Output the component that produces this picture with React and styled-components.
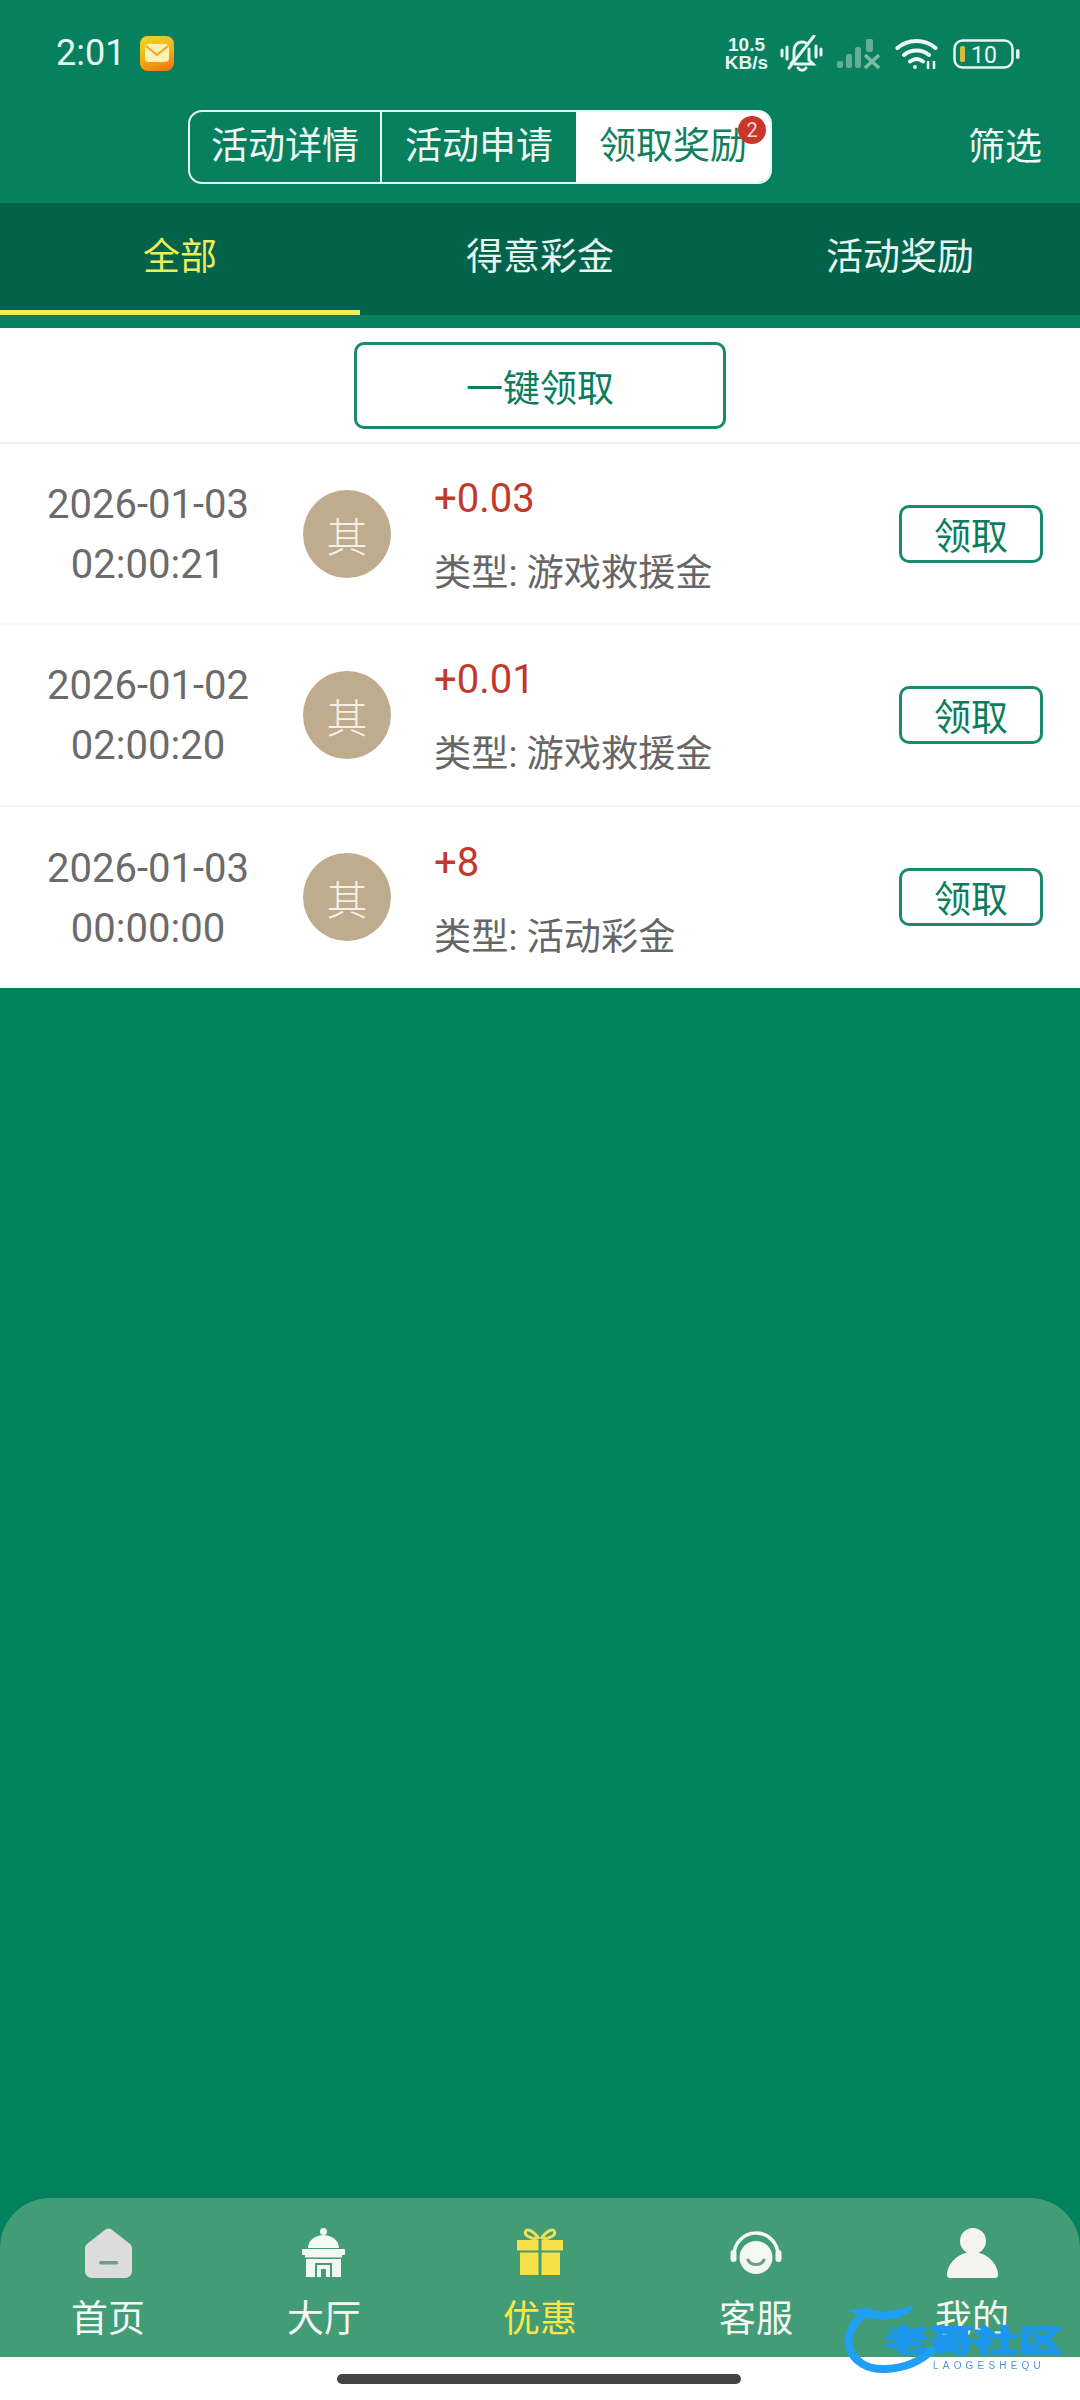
import React from "react";
import styled, { createGlobalStyle } from "styled-components";

const Global = createGlobalStyle`
  html, body { margin: 0; padding: 0; background: #fff; }
  * { box-sizing: border-box; }
  body { font-family: Roboto, "Noto Sans CJK SC", sans-serif; font-weight: 400; }
`;
const Page = styled.div`
  width: 1080px; height: 2400px; display: flex; flex-direction: column; background: #fff; position: relative; overflow: hidden;
`;
const Header = styled.div`background: #07805f; height: 203px; display: flex; flex-direction: column;`;
const StatusBar = styled.div`height: 110px; padding: 34px 60px 0 56px; display: flex; justify-content: space-between; align-items: flex-start;`;
const Clock = styled.div`display: flex; align-items: center; gap: 15px; color: #e3f8f0; font-size: 36px; line-height: 38px; height: 38px;`;
const MailBadge = styled.div`width: 34px; height: 35px; border-radius: 8px; background: linear-gradient(160deg, #e6dc2c, #f7a913 55%, #f2700f); display: flex; align-items: center; justify-content: center;`;
const StatusIcons = styled.div`display: flex; align-items: center; height: 40px; color: #e6f5ef;`;
const Speed = styled.div`font-size: 19px; line-height: 18px; font-weight: 700; text-align: center; font-family: "Liberation Sans", sans-serif; color: #e6f5ef; width: 47px; margin-right: 10px;`;
const StatusGlyph = styled.svg`flex: none; margin-right: ${p => p.$gap || 0}px;`;
const NavRow = styled.div`height: 93px; padding: 0 38px 0 188px; display: flex; justify-content: space-between;`;
const Segments = styled.div`width: 584px; height: 74px; border: 2.5px solid #e6f8f2; border-radius: 14px; display: flex; position: relative;`;
const Segment = styled.div`
  flex: none; width: ${p => p.$w}px; display: flex; align-items: center; justify-content: center; font-size: 37px; line-height: 70px;
  color: ${p => p.$active ? "#0f8060" : "#eef8f4"}; background: ${p => p.$active ? "#fff" : "transparent"};
  border-right: ${p => p.$divided ? "2px solid #e6f8f2" : "none"};
  border-radius: ${p => p.$active ? "0 11px 11px 0" : "0"};
`;
const Badge = styled.div`position: absolute; top: 4px; right: 4px; width: 28px; height: 28px; border-radius: 50%; background: #c9362b; color: #f7dcd8; font-size: 20px; line-height: 28px; text-align: center;`;
const Filter = styled.div`color: #eef8f4; font-size: 37px; line-height: 76px;`;
const TabBand = styled.div`background: #07805f; height: 125px;`;
const Tabs = styled.div`background: #02634a; height: 112px; display: grid; grid-template-columns: repeat(3, 360px);`;
const Tab = styled.div`
  display: flex; align-items: center; justify-content: center; font-size: 37px; padding-bottom: 6px;
  color: ${p => p.$active ? "#ecec5e" : "#e8f5f0"};
  border-bottom: 5px solid ${p => p.$active ? "#ecec5e" : "transparent"};
`;
const ClaimAllBar = styled.div`height: 116px; padding-top: 14px; display: flex; justify-content: center; border-bottom: 2px solid #f1f1f1;`;
const ClaimAll = styled.div`width: 372px; height: 87px; border: 3px solid #1a8a6c; border-radius: 10px; color: #0b7d5c; font-size: 37px; display: flex; align-items: center; justify-content: center;`;
const Row = styled.div`height: 181.3px; display: flex; align-items: center; border-bottom: 2px solid #f3f3f3; &:last-child { border-bottom: none; }`;
const DateCol = styled.div`width: 303px; padding: 3px 7px 0 0; text-align: center; color: #6b6b6b; font-size: 40px; line-height: 60px; flex: none;`;
const Avatar = styled.div`width: 88px; height: 88px; border-radius: 50%; background: #bfac8e; color: #f6f1e6; font-size: 41px; font-weight: 300; display: flex; align-items: center; justify-content: center; flex: none;`;
const Info = styled.div`margin-left: 43px; flex: 1; display: flex; flex-direction: column;`;
const Amount = styled.div`color: #c0392b; font-size: 40px; line-height: 50px; margin-top: 5px;`;
const Kind = styled.div`color: #666; font-size: 37.2px; line-height: 50px; margin-top: 24px;`;
const ClaimBtn = styled.div`width: 144px; height: 58px; margin-right: 37px; border: 3px solid #1a8a6c; border-radius: 10px; color: #0b7d5c; font-size: 37px; display: flex; align-items: center; justify-content: center; flex: none;`;
const Body = styled.div`flex: 1; background: #01815e; display: flex; flex-direction: column; justify-content: flex-end;`;
const BottomNav = styled.div`height: 159px; background: #429c75; border-radius: 50px 50px 0 0; display: grid; grid-template-columns: repeat(5, 216px);`;
const NavItem = styled.div`display: flex; flex-direction: column; align-items: center; padding-top: 30px; color: ${p => p.$active ? "#f7e64a" : "#f3f8f5"}; font-size: 37px;`;
const NavIcon = styled.svg`display: block; flex: none;`;
const NavLabel = styled.div`line-height: 50px; margin-top: 17px;`;
const HomeArea = styled.div`height: 43px; display: flex; justify-content: center; padding-top: 17px; background: #fff;`;
const HomeBar = styled.div`width: 404px; height: 10px; border-radius: 5px; background: #444; margin-left: -2px;`;
const Watermark = styled.div`position: absolute; left: 844px; top: 2300px; width: 225px; height: 80px; filter: blur(0.6px);`;
const WmTitle = styled.div`
  position: absolute; left: 41px; top: 20px; width: 120px; font-family: "Noto Sans CJK SC", sans-serif; font-weight: 900; font-size: 30px; line-height: 36px; white-space: nowrap;
  transform: scaleX(1.48); transform-origin: left top;
  color: #1c97f2; -webkit-text-stroke: 1px #1c97f2;
`;
const WmSub = styled.div`position: absolute; left: 89px; top: 61px; font-family: "Liberation Sans", sans-serif; font-weight: 400; font-size: 10px; line-height: 10px; letter-spacing: 4.2px; color: #4f95dc; white-space: nowrap;`;
const WmRing = styled.svg`position: absolute; left: 0; top: 0;`;

const rows = [
  ["2026-01-03", "02:00:21", "+0.03", "类型: 游戏救援金"],
  ["2026-01-02", "02:00:20", "+0.01", "类型: 游戏救援金"],
  ["2026-01-03", "00:00:00", "+8", "类型: 活动彩金"],
];

const HomeIcon = () => (
  <NavIcon width="47" height="50" viewBox="0 0 47 50"><path d="M20.500 1.500c1.800-1.500 4.200-1.500 6 0l18 14c1.600 1.200 2.500 3 2.500 5V43c0 4-3 7-7 7H7c-4 0-7-3-7-7V20.500c0-2 .9-3.800 2.500-5z" fill="#dcdcdc"/><rect x="14" y="33" width="19" height="3.500" rx="1.700" fill="#6f9e88"/></NavIcon>
);
const HallIcon = () => (
  <NavIcon width="44" height="50" viewBox="0 0 44 50" fill="#f3f8f5">
    <circle cx="21.500" cy="3.500" r="3.500"/>
    <path d="M6 20C6 12 14 7 21.500 7S37 12 37 20z"/>
    <rect x="0" y="21" width="43" height="6" rx="1"/>
    <rect x="3" y="27" width="37" height="2.500" />
    <rect x="4" y="31" width="35" height="4"/>
    <rect x="4" y="35" width="9" height="14"/>
    <rect x="30" y="35" width="9" height="14"/>
    <path d="M15 37h13v12h-4V41h-5v8h-4z"/>
  </NavIcon>
);
const GiftIcon = () => (
  <NavIcon width="46" height="50" viewBox="0 0 46 50"><path d="M22 11C17 3 10 0 8.500 3.500 7 7 12 10 20 11M24 11c5-8 12-11 13.500-7.500C39 7 34 10 26 11" fill="none" stroke="#e9dd5a" strokeWidth="3"/><path d="M0 12h21.500v10.500H0zM24.500 12H46v10.500H24.500zM3 24.500h18.500V47H3zM24.500 24.500H43V47H24.500z" fill="#f7e04a"/></NavIcon>
);
const ServiceIcon = () => (
  <NavIcon width="52" height="50" viewBox="0 0 52 50">
    <path d="M4 27A22 22 0 0 1 48 27" fill="none" stroke="#f3f8f5" strokeWidth="3.500"/>
    <circle cx="26" cy="29.500" r="16.500" fill="#f3f8f5"/>
    <rect x="0.500" y="22" width="6" height="12" rx="3" fill="#f3f8f5"/>
    <rect x="45.500" y="22" width="6" height="12" rx="3" fill="#f3f8f5"/>
    <path d="M18 32c3 6 13 6 16 0" fill="none" stroke="#6f9e88" strokeWidth="3" strokeLinecap="round"/>
  </NavIcon>
);
const UserIcon = () => (
  <NavIcon width="51" height="50" viewBox="0 0 51 50" fill="#f4f4f1"><circle cx="26" cy="13" r="13"/><path d="M25.500 24C40 24 51 36 51 47c0 2-1 3-3 3H3c-2 0-3-1-3-3C0 36 11 24 25.500 24z"/></NavIcon>
);

export default function App() {
  return (
    <Page>
      <Global />
      <Header>
        <StatusBar>
          <Clock>
            2:01
            <MailBadge>
              <svg width="26" height="20" viewBox="0 0 26 20"><rect x="1" y="1" width="24" height="18" rx="4" fill="#fff0b4"/><path d="M2 3l11 9 11-9" fill="none" stroke="#f4a31a" strokeWidth="2"/></svg>
            </MailBadge>
          </Clock>
          <StatusIcons>
            <Speed>10.5<br />KB/s</Speed>
            <StatusGlyph $gap={14} width="43" height="38" viewBox="0 0 43 38" fill="none" stroke="#e6f5ef" strokeWidth="3" strokeLinecap="round">
              <path d="M11 29l3-4v-9c0-5 3-9 8-9 2 0 4 .500 5 2M29 14v11l4 4H15"/><path d="M18 33c2 3 6 3 8 0"/><path d="M9 33L34 1"/><path d="M2 15v6M7 12v12M36 11v11M41 14v6"/>
            </StatusGlyph>
            <StatusGlyph $gap={12} width="46" height="32" viewBox="0 0 46 32" fill="#66ad94">
              <rect x="0" y="23" width="6" height="7" rx="2"/><rect x="9" y="16" width="6" height="14" rx="2"/><rect x="18" y="9" width="6" height="21" rx="2"/><rect x="29" y="1" width="7" height="13" rx="2"/>
              <path d="M28 17l14 13M42 17L28 30" stroke="#7dbaa3" strokeWidth="3.500" fill="none"/>
            </StatusGlyph>
            <StatusGlyph $gap={13} width="45" height="32" viewBox="0 0 45 32" fill="none" stroke="#eef8f4" strokeWidth="4" strokeLinecap="round">
              <path d="M2.500 10c10-9.500 28-9.500 38 0M9 17c7-6 18-6 25 0M15 23.500c4-3 9-3 13 0"/><circle cx="20" cy="29" r="2" fill="#eef8f4" stroke="none"/>
              <path d="M33 23v8M39 23v8" strokeWidth="2.500" strokeLinecap="butt"/>
            </StatusGlyph>
            <svg width="67" height="31" viewBox="0 0 67 31" fill="none"><rect x="1.500" y="1.500" width="58" height="27" rx="8" stroke="#e6f5ef" strokeWidth="2.500"/><rect x="7" y="7" width="5" height="16" rx="1.500" fill="#d9b93c"/><text x="18" y="24" fontSize="23" fontFamily="Roboto" fill="#eef8f4">10</text><rect x="63" y="10" width="3.500" height="10" rx="1.700" fill="#e6f5ef"/></svg>
          </StatusIcons>
        </StatusBar>
        <NavRow>
          <Segments>
            <Segment $w={192} $divided>活动详情</Segment>
            <Segment $w={194}>活动申请</Segment>
            <Segment $w={194} $active>领取奖励</Segment>
            <Badge>2</Badge>
          </Segments>
          <Filter>筛选</Filter>
        </NavRow>
      </Header>
      <TabBand>
        <Tabs>
          <Tab $active>全部</Tab>
          <Tab>得意彩金</Tab>
          <Tab>活动奖励</Tab>
        </Tabs>
      </TabBand>
      <ClaimAllBar><ClaimAll>一键领取</ClaimAll></ClaimAllBar>
      <div>
        {rows.map((r, i) => (
          <Row key={i}>
            <DateCol>{r[0]}<br />{r[1]}</DateCol>
            <Avatar>其</Avatar>
            <Info><Amount>{r[2]}</Amount><Kind>{r[3]}</Kind></Info>
            <ClaimBtn>领取</ClaimBtn>
          </Row>
        ))}
      </div>
      <Body>
        <BottomNav>
          <NavItem><HomeIcon /><NavLabel>首页</NavLabel></NavItem>
          <NavItem><HallIcon /><NavLabel>大厅</NavLabel></NavItem>
          <NavItem $active><GiftIcon /><NavLabel>优惠</NavLabel></NavItem>
          <NavItem><ServiceIcon /><NavLabel>客服</NavLabel></NavItem>
          <NavItem><UserIcon /><NavLabel>我的</NavLabel></NavItem>
        </BottomNav>
      </Body>
      <HomeArea><HomeBar /></HomeArea>
      <Watermark>
        <WmRing width="120" height="80" viewBox="0 0 120 80" fill="none">
          <path d="M18 16C6 26 3 38 5 46 9 62 24 70 42 69 62 68 78 60 88 50" stroke="#1f9ff5" strokeWidth="8" strokeLinecap="round"/>
          <path d="M2 10l20-2 18 4 10-2 20-4-4 6-12 6-14 2-16-2-10-4z" fill="#1f9ff5"/>
        </WmRing>
        <WmTitle>老哥社区</WmTitle>
        <WmSub>LAOGESHEQU</WmSub>
      </Watermark>
    </Page>
  );
}
